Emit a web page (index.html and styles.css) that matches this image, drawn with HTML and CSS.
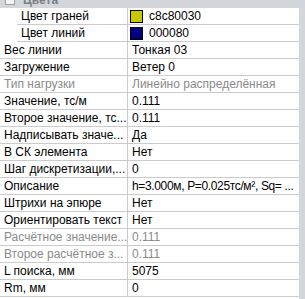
FILE: index.html
```html
<!DOCTYPE html>
<html lang="ru">
<head>
    <meta charset="UTF-8">
    <title>Свойства нагрузки</title>
    <link rel="stylesheet" href="styles.css">
</head>
<body>
    <div class="panel">
        <div class="grid">
            <div class="category">
                <span class="toggle"></span>
                <span class="category-title">Цвета</span>
            </div>

            <div class="row sub">
                <div class="name">Цвет граней</div>
                <div class="value"><span class="swatch yellow"></span>c8c80030</div>
            </div>
            <div class="row sub">
                <div class="name">Цвет линий</div>
                <div class="value"><span class="swatch navy"></span>000080</div>
            </div>

            <div class="row">
                <div class="name">Вес линии</div>
                <div class="value">Тонкая 03</div>
            </div>
            <div class="row">
                <div class="name">Загружение</div>
                <div class="value">Ветер 0</div>
            </div>
            <div class="row disabled">
                <div class="name">Тип нагрузки</div>
                <div class="value">Линейно распределённая</div>
            </div>
            <div class="row">
                <div class="name">Значение, тс/м</div>
                <div class="value">0.111</div>
            </div>
            <div class="row">
                <div class="name">Второе значение, тс...</div>
                <div class="value">0.111</div>
            </div>
            <div class="row">
                <div class="name">Надписывать значе...</div>
                <div class="value">Да</div>
            </div>
            <div class="row">
                <div class="name">В СК элемента</div>
                <div class="value">Нет</div>
            </div>
            <div class="row">
                <div class="name">Шаг дискретизации,...</div>
                <div class="value">0</div>
            </div>
            <div class="row">
                <div class="name">Описание</div>
                <div class="value tight">h=3.000м, P=0.025тс/м², Sq= ...</div>
            </div>
            <div class="row">
                <div class="name">Штрихи на эпюре</div>
                <div class="value">Нет</div>
            </div>
            <div class="row">
                <div class="name">Ориентировать текст</div>
                <div class="value">Нет</div>
            </div>
            <div class="row disabled">
                <div class="name">Расчётное значение...</div>
                <div class="value">0.111</div>
            </div>
            <div class="row disabled">
                <div class="name">Второе расчётное з...</div>
                <div class="value">0.111</div>
            </div>
            <div class="row">
                <div class="name">L поиска, мм</div>
                <div class="value">5075</div>
            </div>
            <div class="row">
                <div class="name">Rm, мм</div>
                <div class="value">0</div>
            </div>
        </div>
        <div class="scrollbar"></div>
    </div>
</body>
</html>
```

FILE: styles.css
```css
:root {
    --band: #d3d6db;
    --line: #cbcbcd;
    --text: #000000;
    --muted: #8a8a8a;
}

body {
    margin: 0;
    padding: 0;
    background: #ffffff;
    font-family: "Liberation Sans", Arial, sans-serif;
    font-size: 12px;
    color: var(--text);
    overflow: hidden;
}

.panel {
    display: flex;
    height: 299px;
    overflow: hidden;
}

.grid {
    width: 299px;
    display: flex;
    flex-direction: column;
    background: #ffffff;
}

.scrollbar {
    flex: 1;
    background: var(--band);
}

/* заголовок категории, обрезан сверху */
.category {
    height: 17px;
    margin-top: -9px;
    background: var(--band);
    display: flex;
    align-items: center;
    flex-shrink: 0;
}

.toggle {
    width: 8px;
    height: 8px;
    margin-left: 5px;
    border: 1px solid #9a9ea6;
    background: #f4f4f4;
}

.category-title {
    margin-left: 8px;
    color: #7a7e85;
    font-weight: 700;
}

.row {
    display: flex;
    height: 16px;
    border-bottom: 1px solid var(--line);
    flex-shrink: 0;
}

.row.sub {
    margin-left: 17px;
}

.name {
    width: 123px;
    padding-left: 4px;
    border-right: 1px solid var(--line);
    display: flex;
    align-items: center;
    white-space: nowrap;
    overflow: hidden;
}

.row.sub .name {
    width: 106px;
}

.value {
    flex: 1;
    padding-left: 4px;
    display: flex;
    align-items: center;
    white-space: nowrap;
    overflow: hidden;
}

.value.tight {
    letter-spacing: -0.35px;
}

.disabled .name,
.disabled .value {
    color: var(--muted);
}

.swatch {
    width: 11px;
    height: 11px;
    border: 1px solid #000000;
    margin-right: 6px;
    margin-left: -2px;
}

.swatch.yellow {
    background: #c8c800;
}

.swatch.navy {
    background: #000080;
}
```
